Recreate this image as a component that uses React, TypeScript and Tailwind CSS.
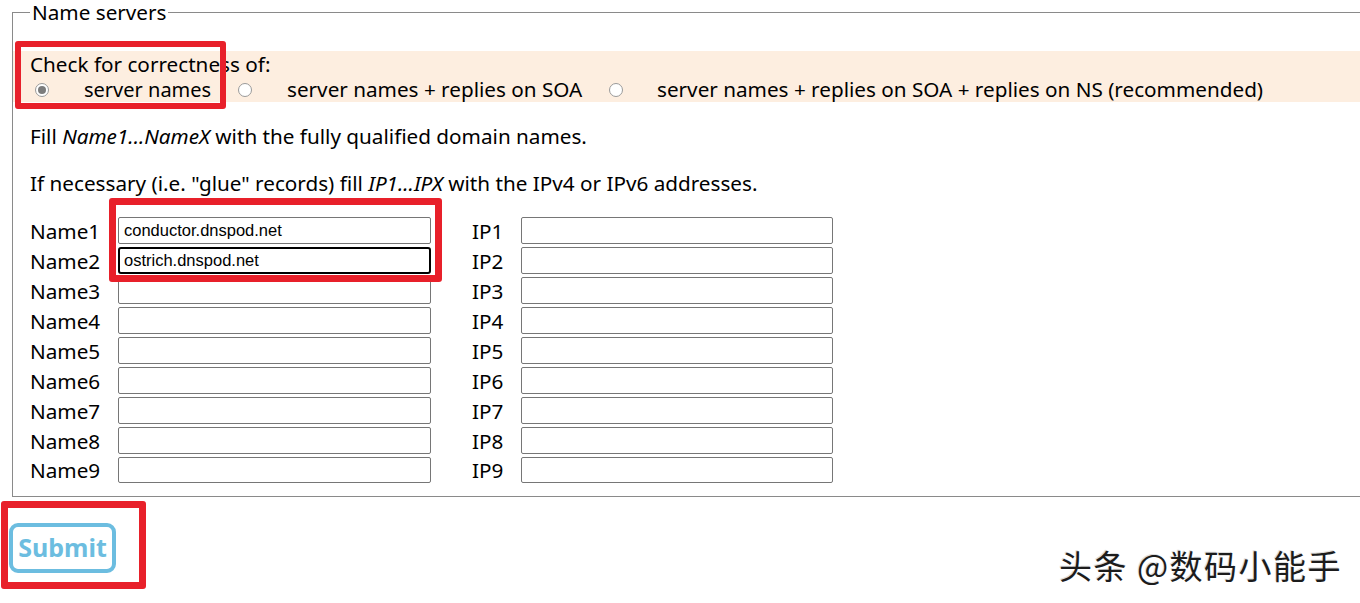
import React from "react";

const Radio = ({ checked }: { checked?: boolean }) => (
  <span className="inline-flex h-[14px] w-[14px] shrink-0 items-center justify-center rounded-full border border-[#9a9a9a] bg-white">
    {checked ? <span className="h-[8px] w-[8px] rounded-full bg-[#7c7c7c]" /> : null}
  </span>
);

const rows = [1, 2, 3, 4, 5, 6, 7, 8, 9];
const values: Record<number, string> = { 1: "conductor.dnspod.net", 2: "ostrich.dnspod.net" };

export default function App() {
  return (
    <div className="relative h-[603px] w-[1360px] overflow-hidden bg-white font-['Noto_Sans',sans-serif] text-[20.7px] text-black">
      <fieldset className="ml-[12px] w-[1400px] border border-[#8a8a8a] pb-[13px]">
        <legend className="ml-[17px] px-[2px] leading-[24px]">Name servers</legend>
        <div className="mt-[27px] bg-[#fdeee0] pl-[17px]">
          <div className="h-[26px] leading-[26px]">Check for correctness of:</div>
          <div className="flex h-[25px] items-center">
            <div className="flex w-[208px] items-center pl-[5px]">
              <Radio checked />
              <span className="ml-[35px] text-[20px]">server names</span>
            </div>
            <div className="flex w-[371px] items-center">
              <Radio />
              <span className="ml-[35px]">server names + replies on SOA</span>
            </div>
            <div className="flex items-center">
              <Radio />
              <span className="ml-[34px]">server names + replies on SOA + replies on NS (recommended)</span>
            </div>
          </div>
        </div>
        <p className="mt-[22px] pl-[17px] leading-[25px]">
          Fill <i>Name1...NameX</i> with the fully qualified domain names.
        </p>
        <p className="mt-[22px] pl-[17px] leading-[25px]">
          If necessary (i.e. "glue" records) fill <i>IP1...IPX</i> with the IPv4 or IPv6 addresses.
        </p>
        <div className="mt-[21px] flex flex-col gap-[3px] pl-[17px]">
          {rows.map((n) => (
            <div key={n} className={n === 9 ? "flex h-[26px] items-center" : "flex h-[27px] items-center"}>
              <span className="w-[88px] leading-[24px]">Name{n}</span>
              <div
                className={
                  n === 2
                    ? "flex h-[27px] w-[313px] items-center rounded-[3px] border-2 border-black pl-[4px] font-['Liberation_Sans',sans-serif] text-[16.5px]"
                    : "flex h-full w-[313px] items-center rounded-[2px] border border-[#767676] pl-[5px] font-['Liberation_Sans',sans-serif] text-[16.5px]"
                }
              >
                {values[n] ?? ""}
              </div>
              <span className="ml-[41px] w-[49px] leading-[24px]">IP{n}</span>
              <div className="h-full w-[312px] rounded-[2px] border border-[#767676]" />
            </div>
          ))}
        </div>
      </fieldset>
      <div className="pl-[9px] pt-[26px]">
        <button className="flex h-[50px] w-[107px] items-center justify-center rounded-[9px] border-[4px] border-[#6cbde0] bg-white font-['Noto_Sans',sans-serif] text-[25px] font-bold text-[#6cbde0]">
          Submit
        </button>
      </div>

      {/* annotation boxes */}
      <div className="pointer-events-none absolute left-[15px] top-[41px] h-[68px] w-[211px] rounded-[3px] border-[6px] border-[#e8202a]" />
      <div className="pointer-events-none absolute left-[109px] top-[198px] h-[84px] w-[333px] rounded-[3px] border-[7px] border-[#e8202a]" />
      <div className="pointer-events-none absolute left-[1px] top-[501px] h-[88px] w-[145px] rounded-[3px] border-[7px] border-[#e8202a]" />

      {/* watermark */}
      <div className="absolute left-[1059px] top-[545px] font-['Noto_Sans_CJK_SC',sans-serif] text-[33px] leading-[40px] tracking-[1.5px] text-[#1c1c1c] [text-shadow:2px_2px_1px_#ffffff,-1px_-1px_0_#dddddd]">
        头条 @数码小能手
      </div>
    </div>
  );
}
